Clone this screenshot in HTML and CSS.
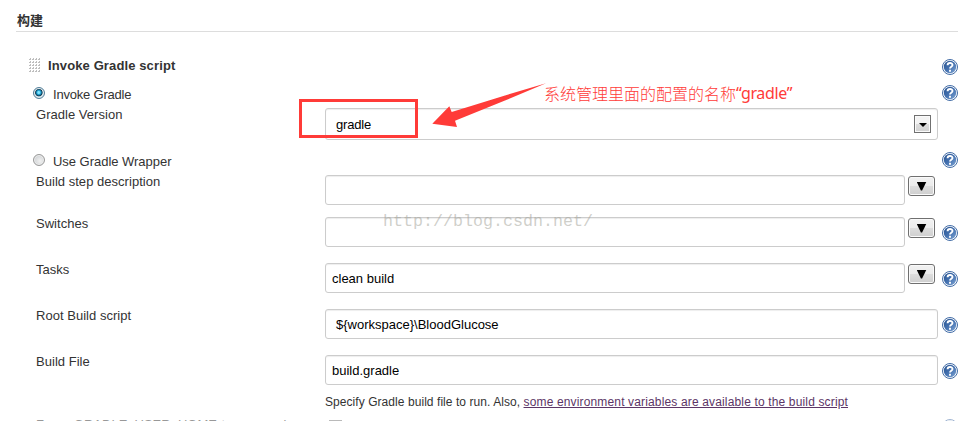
FILE: index.html
```html
<!DOCTYPE html>
<html lang="zh-CN">
<head>
<meta charset="utf-8">
<title>构建</title>
<link rel="stylesheet" href="styles.css">
</head>
<body>
<svg class="defs" width="0" height="0" aria-hidden="true">
  <defs>
    <linearGradient id="blue" x1="0" y1="0" x2="1" y2="1"><stop offset="0" stop-color="#27528f"/><stop offset=".5" stop-color="#4471b0"/><stop offset="1" stop-color="#7fa5d3"/></linearGradient>
    <symbol id="help" viewBox="0 0 16 16">
      <circle cx="8" cy="8" r="7.5" fill="#fff" stroke="#426ca6" stroke-width="1"/>
      <circle cx="8" cy="8" r="6.2" fill="url(#blue)"/>
      <path d="M5.6 6.2C5.6 3.3 10.5 3.3 10.5 6C10.5 7.8 8 7.7 8 9.6M8 10.8V12.7" fill="none" stroke="#fff" stroke-width="1.9"/>
    </symbol>
    <pattern id="dots" width="3" height="3" patternUnits="userSpaceOnUse"><path d="M1 0h1v2H0V1h1z" fill="#bdbdbd"/></pattern>
  </defs>
</svg>
<main class="page">
  <h1 class="section">构建</h1>
  <div class="row head">
    <div class="label title"><svg class="grip" width="11" height="14"><rect width="11" height="14" fill="url(#dots)"/></svg><b>Invoke Gradle script</b></div>
    <div></div><svg class="help"><use href="#help"/></svg>
  </div>
  <div class="row choice">
    <div class="label option"><span class="radio on"></span><span class="tight">Invoke Gradle</span></div>
    <div></div><svg class="help"><use href="#help"/></svg>
  </div>
  <div class="row version">
    <div class="label">Gradle Version</div>
    <div class="field select"><span class="tight">gradle</span><span class="drop"></span></div>
  </div>
  <div class="row choice second">
    <div class="label option"><span class="radio"></span><span>Use Gradle Wrapper</span></div>
    <div></div><svg class="help"><use href="#help"/></svg>
  </div>
  <div class="row desc">
    <div class="label">Build step description</div>
    <div class="combo"><div class="field"></div><div class="expand"></div></div>
  </div>
  <div class="row">
    <div class="label">Switches</div>
    <div class="combo"><div class="field"></div><div class="expand"></div></div>
    <svg class="help"><use href="#help"/></svg>
  </div>
  <div class="row">
    <div class="label">Tasks</div>
    <div class="combo"><div class="field">clean build</div><div class="expand"></div></div>
    <svg class="help"><use href="#help"/></svg>
  </div>
  <div class="row">
    <div class="label">Root Build script</div>
    <div class="field indent">${workspace}\BloodGlucose</div>
    <svg class="help"><use href="#help"/></svg>
  </div>
  <div class="row file">
    <div class="label">Build File</div>
    <div><div class="field">build.gradle</div>
      <p class="hint">Specify Gradle build file to run. Also, <a>some environment variables are available to the build script</a></p></div>
    <svg class="help"><use href="#help"/></svg>
  </div>
  <div class="row last">
    <div class="label">Force GRADLE_USER_HOME to use workspace</div>
    <div><div class="check"></div></div>
    <svg class="help"><use href="#help"/></svg>
  </div>
  <div class="watermark">http://blog.csdn.net/</div>
  <div class="mark"></div>
  <svg class="arrow" width="120" height="50" viewBox="0 0 120 50"><path d="M2.3 42.7L19.3 25.3L21.7 31L75 14.5L116 2.3L75 19.5L25 39.7L27 46Z" fill="#ff3b38"/></svg>
  <div class="note"><span>系统管理里面的配置的名称</span><span class="quote">“gradle”</span></div>
</main>
</body>
</html>
```
FILE: styles.css
```css
body { margin: 0; overflow: hidden; background: #fff; }
* { box-sizing: border-box; }
.defs { position: absolute; }
.page {
  position: relative;
  height: 421px;
  overflow: hidden;
  padding-left: 16px;
  font: 13px/16px "Liberation Sans", "Noto Sans CJK SC", sans-serif;
  color: #333;
}
.section {
  height: 32px;
  margin: 0 0 22px;
  padding: 12px 0 0 1px;
  border-bottom: 1px solid #ddd;
  font: bold 13px/16px "Noto Sans CJK SC", sans-serif;
  color: #333;
}
.row {
  display: grid;
  grid-template-columns: 309px 613px 16px;
  height: 46px;
  align-items: start;
}
.label { padding: 3px 0 0 20px; white-space: nowrap; letter-spacing: .03px; }
.tight { letter-spacing: -.2px; }
.help { width: 16px; height: 16px; margin: 12px 0 0 4px; }
.head { height: 26px; }
.head .help { margin-top: 5px; }
.title { display: flex; gap: 8px; padding: 4px 0 0 13px; letter-spacing: .12px; }
.choice { height: 24px; }
.choice .label { padding: 7px 0 0 17px; letter-spacing: 0; }
.choice .help { margin-top: 5px; }
.option { display: flex; gap: 8px; }
.radio {
  width: 12px;
  height: 12px;
  border: 1px solid #999;
  border-radius: 50%;
  background: radial-gradient(circle at 60% 60%, #f1f1f1, #c3c7ca);
  box-shadow: inset 0 0 0 1px #eee;
}
.radio.on {
  border-color: #527e98;
  background: radial-gradient(circle at 48% 45%, #7be5ff 0 1px, #1795c7 2.2px, #10384f 3.4px, #c4dce7 4.2px);
}
.version { height: 42px; }
.second { height: 25px; }
.second .label { padding-top: 8px; letter-spacing: -.03px; }
.second .help { margin-top: 6px; }
.desc { height: 42px; }
.field {
  height: 30px;
  margin-top: 4px;
  padding: 7px 6px 0;
  border: 1px solid #ccc;
  border-radius: 3px;
  box-shadow: inset 0 1px 1px rgba(0,0,0,.07);
  color: #000;
  white-space: nowrap;
}
.indent { padding-left: 10px; }
.select { display: flex; justify-content: space-between; height: 32px; padding: 8px 6px 0 10px; }
.drop {
  display: grid;
  place-items: center;
  width: 17px;
  height: 18px;
  margin-top: -2px;
  border: 1px solid #707070;
  background: linear-gradient(#f3f3f3 50%, #ddd 50%, #d2d2d2);
  box-shadow: inset 0 0 0 1px #fafafa;
}
.drop::after { content: ""; border: 4px solid transparent; border-top-color: #000; border-bottom: 0; margin-top: 2px; }
.combo { display: grid; grid-template-columns: 580px 27px; gap: 3px; align-items: start; }
.expand {
  display: grid;
  place-items: center;
  height: 20px;
  margin-top: 5px;
  border: 1px solid #707070;
  border-radius: 3px;
  background: linear-gradient(#f2f2f2, #ebebeb 50%, #ddd 50%, #cfcfcf);
  box-shadow: inset 0 0 0 1px #fafafa;
}
.expand::after { content: ""; width: 10px; height: 9px; background: #000; clip-path: polygon(0 0, 100% 0, 56% 100%, 44% 100%); }
.file { height: 64px; }
.hint { margin: 9px 0 0; font-size: 12px; line-height: 16px; letter-spacing: .06px; white-space: nowrap; }
.hint a { color: #5c3566; letter-spacing: .15px; text-decoration: underline; }
.last { opacity: .5; }
.last .label { padding-top: 2px; letter-spacing: 0; word-spacing: 1px; }
.check { width: 13px; height: 13px; margin: 5px 0 0 4px; border: 1px solid #777; }
.last .help { margin-top: 4px; }
.watermark {
  position: absolute;
  left: 383px;
  top: 212px;
  font: 16.67px/20px "Liberation Mono", monospace;
  color: rgba(160,160,150,.5);
}
.mark { position: absolute; left: 299px; top: 99px; width: 119px; height: 39px; border: 3px solid #ff3b38; }
.arrow { position: absolute; left: 430px; top: 81px; }
.note {
  position: absolute;
  left: 544px;
  top: 83px;
  display: flex;
  font: 300 16px/20px "Noto Sans CJK SC", sans-serif;
  color: #ff3b38;
  white-space: nowrap;
}
.quote { font-family: "Noto Sans", sans-serif; font-weight: 400; letter-spacing: -.35px; }
```
